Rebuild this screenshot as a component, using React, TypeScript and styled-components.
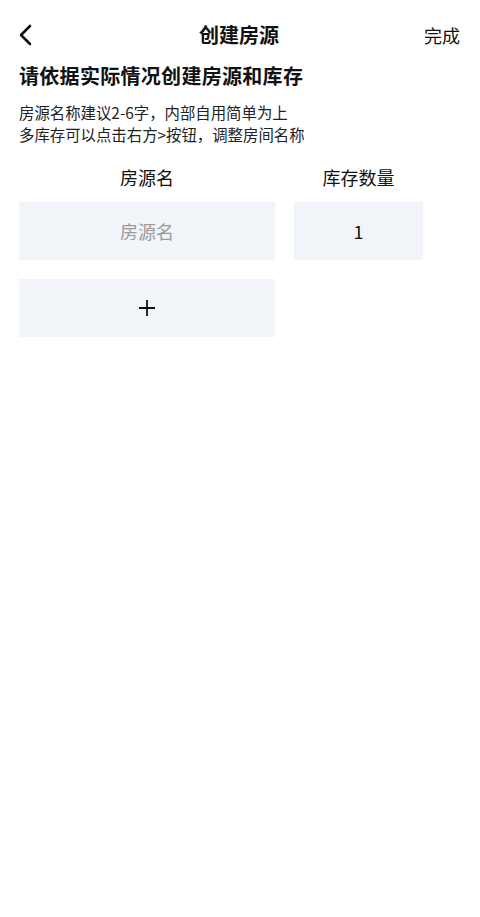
import styled, { createGlobalStyle } from "styled-components";

const GlobalStyle = createGlobalStyle`
    body {
        margin: 0;
        background: #ffffff;
        font-family: "Noto Sans CJK SC", "Noto Sans", sans-serif;
        color: #111111;
    }
`;

const Page = styled.div`
    width: 480px;
    min-height: 917px;
    background: #ffffff;
`;

const NavBar = styled.div`
    display: grid;
    grid-template-columns: 80px 1fr 80px;
    align-items: center;
    height: 58px;
    padding: 6px 20px 0 18px;
`;

const BackButton = styled.div`
    display: flex;
    align-items: center;
    height: 24px;
`;

const NavTitle = styled.div`
    text-align: center;
    font-size: 20px;
    font-weight: 700;
    line-height: 24px;
`;

const NavAction = styled.div`
    text-align: right;
    font-size: 18px;
    line-height: 24px;
`;

const Content = styled.div`
    padding: 0 20px 0 19px;
`;

const Heading = styled.h1`
    margin: 0;
    font-size: 20px;
    font-weight: 700;
    line-height: 24px;
    letter-spacing: 0.3px;
`;

const Hint = styled.p`
    margin: 13px 0 0;
    font-size: 15.4px;
    line-height: 22px;
    color: #222222;
`;

const FormGrid = styled.div`
    display: grid;
    grid-template-columns: 256px 129px;
    column-gap: 19px;
    row-gap: 19px;
    margin-top: 20px;
`;

const ColumnLabel = styled.div`
    text-align: center;
    font-size: 18px;
    line-height: 24px;
    margin-bottom: -6px;
`;

const Field = styled.div<{ $placeholder?: boolean }>`
    display: flex;
    align-items: center;
    justify-content: center;
    height: 58px;
    background: #f1f4f9;
    font-size: 18px;
    color: ${(p) => (p.$placeholder ? "#9a9a9a" : "#111111")};
`;

const AddButton = styled(Field)`
    cursor: pointer;
`;

export default function App() {
    return (
        <>
            <GlobalStyle />
            <Page>
                <NavBar>
                    <BackButton>
                        <svg width="16" height="22" viewBox="0 0 16 22">
                            <polyline
                                points="12,2 3,11 12,20"
                                fill="none"
                                stroke="#111"
                                strokeWidth="2.6"
                                strokeLinecap="round"
                                strokeLinejoin="round"
                            />
                        </svg>
                    </BackButton>
                    <NavTitle>创建房源</NavTitle>
                    <NavAction>完成</NavAction>
                </NavBar>
                <Content>
                    <Heading>请依据实际情况创建房源和库存</Heading>
                    <Hint>
                        房源名称建议2-6字，内部自用简单为上
                        <br />
                        多库存可以点击右方&gt;按钮，调整房间名称
                    </Hint>
                    <FormGrid>
                        <ColumnLabel>房源名</ColumnLabel>
                        <ColumnLabel>库存数量</ColumnLabel>
                        <Field $placeholder>房源名</Field>
                        <Field>1</Field>
                        <AddButton>
                            <svg width="18" height="18" viewBox="0 0 18 18">
                                <path d="M9 1v16M1 9h16" stroke="#111" strokeWidth="1.8" />
                            </svg>
                        </AddButton>
                    </FormGrid>
                </Content>
            </Page>
        </>
    );
}
